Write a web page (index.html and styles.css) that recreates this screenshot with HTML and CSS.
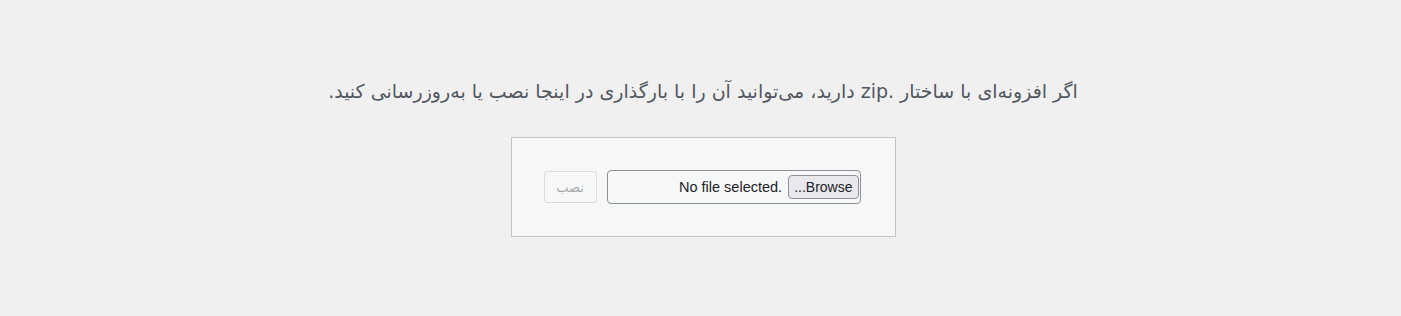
FILE: index.html
```html
<!DOCTYPE html>
<html lang="fa" dir="rtl">
<head>
    <meta charset="UTF-8">
    <title>افزودن افزونه</title>
    <link rel="stylesheet" href="styles.css">
</head>
<body>
    <div class="upload-plugin">
        <p class="install-help">اگر افزونه‌ای با ساختار .zip دارید، می‌توانید آن را با بارگذاری در اینجا نصب یا به‌روزرسانی کنید.</p>
        <form class="wp-upload-form">
            <div class="file-input">
                <span class="file-btn" dir="rtl">Browse...</span>
                <span class="file-label" dir="ltr">No file selected.</span>
            </div>
            <button type="button" class="button" disabled>نصب</button>
        </form>
    </div>
</body>
</html>
```

FILE: styles.css
```css
body {
    margin: 0;
    background: #f0f0f1;
    color: #3c434a;
    font-family: Tahoma, "DejaVu Sans", sans-serif;
}

.upload-plugin {
    display: flex;
    flex-direction: column;
    align-items: center;
    padding: 77px 0 0 5px;
}

.install-help {
    margin: 0;
    color: #50575e;
    font-size: 19px;
    line-height: 28px;
    text-align: center;
}

.wp-upload-form {
    display: flex;
    align-items: center;
    gap: 10px;
    margin-top: 32px;
    padding: 32px 34px 32px 32px;
    background: #f6f7f7;
    border: 1px solid #c3c4c7;
}

.file-input {
    box-sizing: border-box;
    width: 254px;
    height: 34px;
    display: flex;
    align-items: center;
    gap: 6px;
    padding: 0 1px;
    background: #f6f7f7;
    border: 1px solid #8c8f94;
    border-radius: 4px;
}

.file-btn {
    box-sizing: border-box;
    height: 24px;
    padding: 0 5px;
    display: flex;
    align-items: center;
    font-family: "Liberation Sans", Arial, sans-serif;
    font-size: 14px;
    color: #1d2327;
    background: #e9e9ed;
    border: 1px solid #8f8f9d;
    border-radius: 4px;
}

.file-label {
    font-family: "Liberation Sans", Arial, sans-serif;
    font-size: 14.5px;
    color: #1d2327;
}

.button {
    box-sizing: border-box;
    width: 53px;
    height: 32px;
    padding: 0 10px;
    font-family: Tahoma, "DejaVu Sans", sans-serif;
    font-size: 13px;
    color: #a7aaad;
    background: #f6f7f7;
    border: 1px solid #dcdcde;
    border-radius: 3px;
}
```
